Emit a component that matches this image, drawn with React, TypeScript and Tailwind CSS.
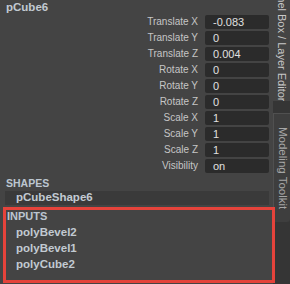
const attrs = [
  { label: "Translate X", value: "-0.083" },
  { label: "Translate Y", value: "0" },
  { label: "Translate Z", value: "0.004" },
  { label: "Rotate X", value: "0" },
  { label: "Rotate Y", value: "0" },
  { label: "Rotate Z", value: "0" },
  { label: "Scale X", value: "1" },
  { label: "Scale Y", value: "1" },
  { label: "Scale Z", value: "1" },
  { label: "Visibility", value: "on" },
];

const inputs = ["polyBevel2", "polyBevel1", "polyCube2"];

export default function App() {
  return (
    <div className="w-[290px] h-[284px] flex overflow-hidden bg-[#353535] font-['Liberation_Sans',Arial,sans-serif]">
      {/* channel box panel */}
      <div className="w-[273px] h-full bg-[#444444] flex flex-col">
        <div className="h-[15px] pl-[6px] flex items-center text-[11.5px] font-bold text-[#c2cad2] leading-none">
          pCube6
        </div>

        <div className="flex flex-col gap-[2px]">
          {attrs.map((a) => (
            <div key={a.label} className="flex h-[14px] items-center">
              <div className="w-[198px] text-right text-[10px] leading-none text-[#c6c6c6]">
                {a.label}
              </div>
              <div className="ml-[7px] w-[64px] h-full bg-[#2b2b2b] rounded-[2px] pl-[8px] flex items-center text-[11px] leading-none text-[#e0e0e0]">
                {a.value}
              </div>
            </div>
          ))}
        </div>

        <div className="mt-[2px] h-[16px] pl-[6px] flex items-center text-[10.5px] font-bold text-[#bcc6d0] leading-none">
          SHAPES
        </div>
        <div className="ml-[5px] w-[264px] h-[14px] bg-[#3a3a3a] pl-[11px] flex items-center text-[11.5px] font-bold text-[#c2cad2] leading-none">
          pCubeShape6
        </div>

        {/* highlighted inputs */}
        <div className="relative mt-[2px] ml-[3px] w-[272px] h-[76px] border-[3px] border-[#e5433b]">
          <div className="h-[13px] pl-[1px] flex items-center text-[11px] font-bold text-[#bcc6d0] leading-none">
            INPUTS
          </div>
          <div className="mt-[2px] flex flex-col">
            {inputs.map((n) => (
              <div key={n} className="h-[16px] pl-[10px] flex items-center text-[11.5px] font-bold text-[#c2cad2] leading-none">
                {n}
              </div>
            ))}
          </div>
        </div>
      </div>

      {/* side tabs */}
      <div className="flex-1 flex flex-col">
        <div className="h-[101px] bg-[#444444] overflow-hidden flex flex-col justify-end items-center">
          <span className="[writing-mode:vertical-rl] whitespace-nowrap text-[11px] leading-none text-[#c8c8c8]">
            Channel Box / Layer Editor
          </span>
        </div>
        <div className="h-[12px]" />
        <div className="h-[109px] bg-[#3e3e3e] border-t border-l border-[#505050] rounded-br-[3px] flex justify-center items-center">
          <span className="[writing-mode:vertical-rl] whitespace-nowrap text-[11.5px] leading-none text-[#a6a6a6]">
            Modeling Toolkit
          </span>
        </div>
      </div>
    </div>
  );
}
